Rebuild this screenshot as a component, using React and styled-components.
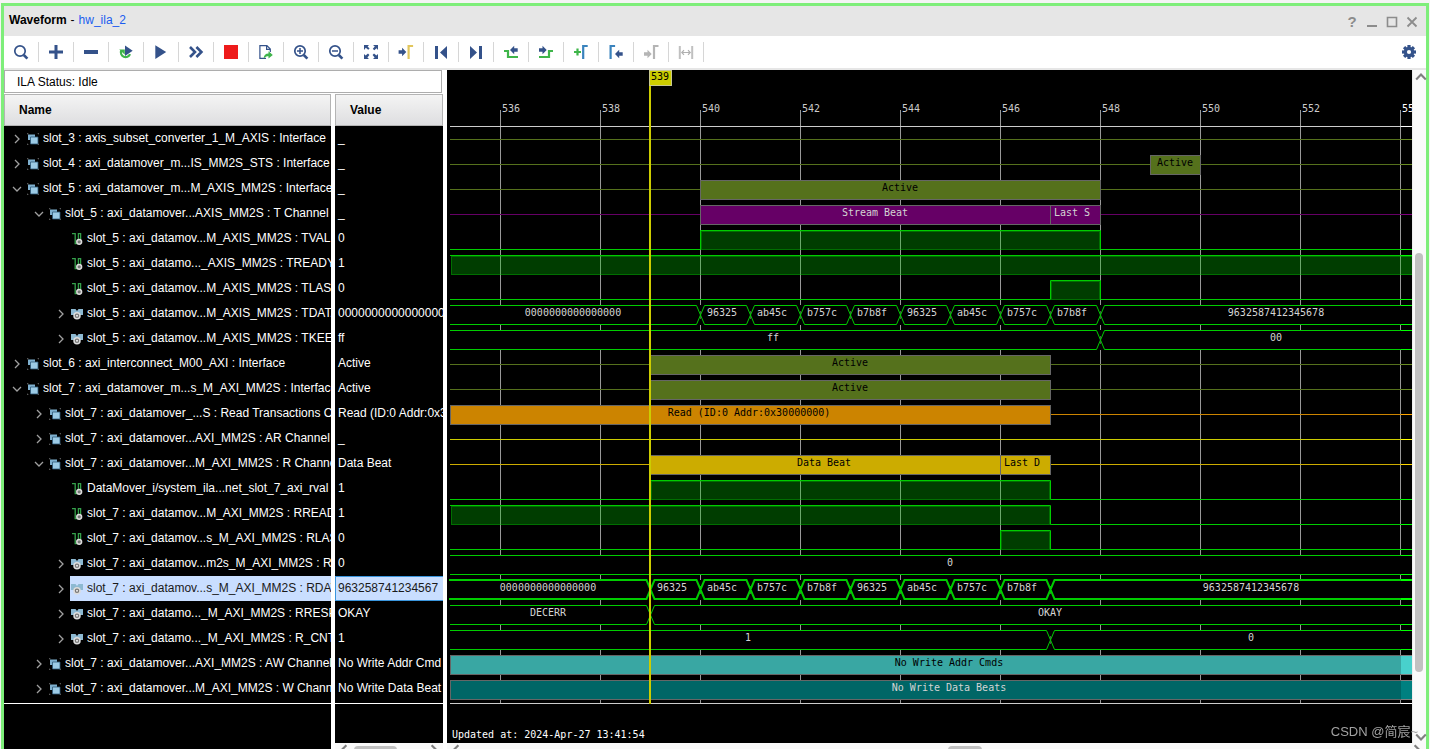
import React from "react";
import styled, { createGlobalStyle } from "styled-components";

const GlobalStyle = createGlobalStyle`
  *, *::before, *::after { box-sizing: border-box; }
  body {
    margin: 0;
    background: #f4f4f4;
    font-family: "Liberation Sans", Arial, sans-serif;
    font-size: 12px;
    color: #000;
    overflow: hidden;
  }
`;

const NAVY = "#34528a";
const GREEN = "#3fb54a";
const MONO = '"DejaVu Sans Mono", monospace';

/* ---------- window frame ---------- */

const Window = styled.main`
  display: flex;
  flex-direction: column;
  min-height: 100vh;
  margin: 3px 1px 0;
  border: 3px solid #7eee7a;
  border-bottom: 0;
  background: #fff;
`;

const TitleBar = styled.header`
  display: flex;
  align-items: center;
  justify-content: space-between;
  height: 30px;
  padding: 0 7px 2px 5px;
  background: #e6e6e6;
`;

const Title = styled.h1`
  display: flex;
  gap: 4px;
  margin: 0;
  font-size: 12px;
  line-height: 16px;
  font-weight: bold;
`;

const Dash = styled.span`
  font-weight: normal;
`;

const CoreLink = styled.a`
  color: #1a5cf0;
  font-weight: normal;
  text-decoration: none;
`;

const WindowControls = styled.div`
  display: flex;
  padding-top: 4px;
`;

const ControlButton = styled.button`
  display: grid;
  place-items: center;
  width: 20px;
  height: 20px;
  padding: 0;
  margin-right: ${(p) => (p.$last ? "-3px" : "0")};
  border: 0;
  background: none;
  color: #8c8c8c;
  font: bold 15px/20px "Liberation Sans", Arial, sans-serif;
`;

const Toolbar = styled.div`
  display: flex;
  align-items: center;
  height: 34px;
  padding-right: 9px;
  border-bottom: 2px solid #e6e6e6;
  background: #fff;
`;

const ToolButton = styled.button`
  display: grid;
  place-items: center;
  width: 35px;
  height: 20px;
  padding: 0;
  border: 0;
  border-right: 1px solid #d6d6d6;
  background: none;
`;

const SettingsButton = styled.button`
  display: grid;
  place-items: center;
  width: 16px;
  height: 20px;
  margin-left: auto;
  padding: 0;
  border: 0;
  background: none;
`;

const Content = styled.div`
  display: flex;
  flex: 1;
`;

/* ---------- signal table ---------- */

const SignalPane = styled.section`
  display: flex;
  flex-direction: column;
  flex: none;
  width: 439px;
`;

const Status = styled.div`
  height: 23px;
  margin: 0 1px 1px 0;
  padding-left: 12px;
  border: 1px solid #adadad;
  line-height: 22px;
`;

const SignalTable = styled.table`
  width: 100%;
  table-layout: fixed;
  border-collapse: separate;
  border-spacing: 0;
`;

const HeadCell = styled.th`
  width: ${(p) => (p.$name ? "331px" : "auto")};
  padding: ${(p) => (p.$name ? "0 4px 0 0" : "0")};
  text-align: left;
`;

const HeadBox = styled.div`
  height: 32px;
  padding-left: 14px;
  border: 1px solid #b4b4b4;
  background: linear-gradient(#f4f4f4, #dedee0);
  line-height: 30px;
`;

const NameCell = styled.td`
  height: 25px;
  padding: 0;
  border-right: 4px solid #fff;
  background: #000;
  overflow: hidden;
`;

const NameRow = styled.div`
  display: flex;
  height: 25px;
  padding-left: ${(p) => 6 + p.$level * 22}px;
`;

const Toggle = styled.button`
  display: grid;
  place-items: center;
  flex: none;
  width: 16px;
  height: 25px;
  padding: 0 3px 0 0;
  border: 0;
  background: none;
`;

const ToggleSpace = styled.span`
  flex: none;
  width: 16px;
`;

const SignalLabel = styled.span`
  display: flex;
  align-items: center;
  flex: 1;
  gap: 4px;
  min-width: 0;
  padding-left: 1px;
  overflow: hidden;
  background: ${(p) => (p.$selected ? "#c9deff" : "transparent")};
  color: ${(p) => (p.$selected ? "#1a1a1a" : "#fff")};

  svg { flex: none; }
`;

const SignalName = styled.span`
  flex: 1;
  min-width: 0;
  padding-bottom: 2px;
  white-space: nowrap;
  overflow: hidden;
`;

const ValueCell = styled.td`
  height: 25px;
  padding: ${(p) => (p.$selected ? "0 0 2px 2px" : "0 0 2px 3px")};
  border: ${(p) => (p.$selected ? "1px solid #3a95dc" : "0")};
  border-right: 0;
  background: ${(p) => (p.$selected ? "#c9deff" : "#000")};
  color: ${(p) => (p.$selected ? "#1a1a1a" : "#fff")};
  white-space: nowrap;
  overflow: hidden;
`;

const PaneFooter = styled.div`
  display: flex;
  flex: 1;
  gap: 4px;
`;

const FooterFill = styled.div`
  height: ${(p) => (p.$short ? "42px" : "100%")};
  padding-top: 2px;
  background: #000;

  &::before {
    content: "";
    display: block;
    height: 1px;
    background: #fff;
  }
`;

const FooterName = styled.div`
  width: 327px;
`;

const FooterValue = styled.div`
  flex: 1;
`;

/* ---------- scroll bars ---------- */

const HScroll = styled.div`
  display: flex;
  align-items: center;
  justify-content: space-between;
  height: 14px;
  padding: 0 3px;
  background: #fafafa;
`;

const HThumb = styled.div`
  width: ${(p) => p.$width}px;
  height: 8px;
  margin-left: ${(p) => p.$before || 0}px;
  margin-right: ${(p) => p.$after || 0}px;
  border-radius: 4px;
  background: #c1c1c1;
`;

const VScroll = styled.div`
  display: flex;
  flex-direction: column;
  align-items: center;
  flex: none;
  width: 14px;
  height: 673px;
  padding: 1px 0 0 2px;
  border-left: 1px solid #eee;
  background: #fafafa;
`;

const VThumb = styled.div`
  width: 8px;
  height: 419px;
  margin: 170px 3px auto 0;
  border-radius: 4px;
  background: #c1c1c1;
`;

/* ---------- waveform ---------- */

const WavePane = styled.section`
  flex: 1;
  min-width: 0;
  margin-left: 4px;
`;

const WaveBody = styled.div`
  display: flex;
`;

const Canvas = styled.div`
  flex: 1;
  min-width: 0;
  height: 673px;
  background: #000;
  overflow: hidden;
`;

const WaveSvg = styled.svg`
  display: block;
  width: 100%;
  height: 673px;
  font: 10px ${MONO};
`;

const Watermark = styled.div`
  position: fixed;
  right: 12px;
  bottom: 8px;
  font: 13px/18px "Liberation Sans", "Noto Sans CJK SC", sans-serif;
  color: #a2a2a2;
  pointer-events: none;
`;

/* ---------- icons ---------- */

const Icon = ({ children, size = 16 }) => (
  <svg width={size} height={size} viewBox={`0 0 ${size} ${size}`} fill="none" aria-hidden="true">
    {children}
  </svg>
);

const Lens = ({ children }) => (
  <Icon>
    <circle cx="7" cy="7" r="5.2" stroke={NAVY} strokeWidth="1.7" />
    <path d="M10.8 11l3.6 3.6" stroke={NAVY} strokeWidth="2.6" />
    {children}
  </Icon>
);

const Marker = ({ x, color }) => (
  <path d={`M${x} 15V2H${x + 4.5}`} stroke={color} strokeWidth="2.2" />
);

const ArrowRight = ({ x = 1, y = 8, color = NAVY }) => (
  <path d={`M${x} ${y - 1.8}h3.5v-2.4l4.2 4.2-4.2 4.2v-2.4h-3.5z`} fill={color} />
);

const ArrowLeft = ({ x = 8, y = 8, color = NAVY }) => (
  <path d={`M${x + 7.7} ${y - 1.8}h-3.5v-2.4l-4.2 4.2 4.2 4.2v-2.4h3.5z`} fill={color} />
);

const TOOLS = [
  ["Search", <Lens />],
  ["Add", <Icon><path d="M8 1v14M1 8h14" stroke={NAVY} strokeWidth="3" /></Icon>],
  ["Remove", <Icon><path d="M1 8h14" stroke={NAVY} strokeWidth="4" /></Icon>],
  ["Run trigger with auto re-trigger", (
    <Icon>
      <path d="M3.2 6.5a4.7 4.7 0 1 0 8.8 3.6" stroke={GREEN} strokeWidth="2.2" />
      <path d="M1.2 5.4h5.6v5.4z" fill={GREEN} />
      <path d="M7 1.5l7.7 5.3L7 12z" fill={NAVY} />
    </Icon>
  )],
  ["Run trigger", <Icon><path d="M2.3 1.3L13.2 8 2.3 15z" fill={NAVY} /></Icon>],
  ["Run trigger immediate", (
    <Icon><path d="M2 3l5 5-5 5M8.4 3l5 5-5 5" stroke={NAVY} strokeWidth="2.6" /></Icon>
  )],
  ["Stop trigger", <Icon><path d="M1 1h14v14H1z" fill="#ee1b1b" /></Icon>],
  ["Export data", (
    <Icon>
      <path d="M8 14.4H1.9V1.6h7l3.4 3.4v3M8.6 1.6v3.8h3.7" stroke={NAVY} strokeWidth="1.2" />
      <path d="M5.6 14.8c.3-3.6 2-5.2 4.9-5.2V7.3l4.3 3.7-4.3 3.6v-2.3c-2 0-3.3.6-4.9 2.5z" fill={GREEN} />
    </Icon>
  )],
  ["Zoom in", <Lens><path d="M7 4v6M4 7h6" stroke={NAVY} strokeWidth="1.5" /></Lens>],
  ["Zoom out", <Lens><path d="M4 7h6" stroke={NAVY} strokeWidth="1.5" /></Lens>],
  ["Zoom fit", (
    <Icon>
      <path d="M1 1h5L4.6 2.4l2 2-1.4 1.4-2.4-2L1 6zM15 1v5l-1.4-1.8-2.4 2-1.4-1.4 2-2.4L10 1zM1 15v-5l1.6 1.6 2.4-2 1.4 1.4-2 2.4L6 15zM15 15h-5l1.6-1.6-2-2.4 1.4-1.4 2.4 2L15 10z" fill={NAVY} />
    </Icon>
  )],
  ["Go to cursor", <Icon><ArrowRight x={0.6} /><Marker x={10.6} color="#e2c65c" /></Icon>],
  ["Go to time 0", <Icon><path d="M2 2h3v13H2zM14 2v13L7 8.5z" fill={NAVY} /></Icon>],
  ["Go to last time", <Icon><path d="M11 2h3v13h-3zM2 2v13l7-6.5z" fill={NAVY} /></Icon>],
  ["Previous transition", (
    <Icon><path d="M1 7h4v6h10" stroke={GREEN} strokeWidth="2.2" /><ArrowLeft x={7} y={6} /></Icon>
  )],
  ["Next transition", (
    <Icon><path d="M1 13h10V7h4" stroke={GREEN} strokeWidth="2.2" /><ArrowRight x={1} y={6} /></Icon>
  )],
  ["Add marker", (
    <Icon><path d="M1 8h7M4.5 4.5v7" stroke={GREEN} strokeWidth="2.2" /><Marker x={10.2} color="#3a83bd" /></Icon>
  )],
  ["Previous marker", <Icon><Marker x={2.6} color="#3a83bd" /><ArrowLeft x={7} y={10} /></Icon>],
  ["Next marker", <Icon><ArrowRight y={10} color="#b5b5b5" /><Marker x={11} color="#b5b5b5" /></Icon>],
  ["Swap cursors", (
    <Icon>
      <path d="M1.8 2v13M14.2 2v13" stroke="#c0c0c0" strokeWidth="2" />
      <path d="M4 8.5h8M6 6.2L3.8 8.5 6 10.8M10 6.2l2.2 2.3-2.2 2.3" stroke="#b0b0b0" strokeWidth="1.2" />
    </Icon>
  )],
];

const Gear = () => (
  <Icon>
    <g fill={NAVY}>
      {[0, 45, 90, 135].map((a) => (
        <rect key={a} x="6.4" y="1" width="3.2" height="14" transform={`rotate(${a} 8 8)`} />
      ))}
      <circle cx="8" cy="8" r="5.2" />
    </g>
    <circle cx="8" cy="8" r="2.1" fill="#fff" />
  </Icon>
);

const Chevron = ({ dir, size = 10, color = "#a0a0a0", width = 1.3 }) => {
  const turn = { right: 0, down: 90, left: 180, up: 270 }[dir];
  return (
    <svg width={size} height={size} viewBox="0 0 10 10" fill="none" aria-hidden="true">
      <path d="M3 1l4 4-4 4" stroke={color} strokeWidth={width} transform={`rotate(${turn} 5 5)`} />
    </svg>
  );
};

const GroupGlyph = () => (
  <Icon size={12}>
    <path d="M0 1.5V0h1.5M10.5 0H12v1.5M0 10.5V12h1.5M10.5 12H12v-1.5" stroke="#777" />
    <path d="M1 1.5h7v5.5H1z" fill="#7fb0cf" />
    <path d="M3.5 4h7.5v7H3.5z" fill="#9ccbe6" stroke="#2d5877" strokeWidth=".8" />
  </Icon>
);

const WireGlyph = () => (
  <Icon size={12}>
    <path d="M1 .7h3.2v10h3M7.4 8V.7h2.2V6" stroke="#35a14b" strokeWidth="1.3" />
    <circle cx="8.2" cy="8.8" r="2.4" fill="#777" stroke="#dcdcdc" strokeWidth="1.5" />
  </Icon>
);

const BusGlyph = () => (
  <Icon size={12}>
    <path d="M0 1h4.5L6 3l1.5-2H12v6H0z" fill="#8db9d2" />
    <circle cx="6" cy="7.8" r="3" fill="#777" stroke="#dcdcdc" strokeWidth="1.5" />
    <circle cx="6" cy="7.8" r="1" fill="#eee" />
  </Icon>
);

const GLYPHS = { group: GroupGlyph, wire: WireGlyph, bus: BusGlyph };

/* ---------- data ---------- */

const OLIVE = "#6b8e23";
const PURPLE = "#800080";
const ORANGE = "#ffa500";
const GOLD = "#ffd700";
const TURQUOISE = "#48d1cc";
const TEAL = "#008080";
const END = 4000;

const BEATS = ["96325", "ab45c", "b757c", "b7b8f", "96325", "ab45c", "b757c", "b7b8f"];
const beatLabels = (x) => BEATS.map((t, i) => [t, x + i * 50]);
const beatEdges = (x) => Array.from({ length: 9 }, (_, i) => x + i * 50);

// Wave x values are pixels from the left edge of the plot; one sample is 50px.
const SIGNALS = [
  { level: 0, kind: "group", open: false, name: "slot_3 : axis_subset_converter_1_M_AXIS : Interface", value: "_",
    wave: { type: "bars", color: OLIVE, bars: [] } },
  { level: 0, kind: "group", open: false, name: "slot_4 : axi_datamover_m...IS_MM2S_STS : Interface", value: "_",
    wave: { type: "bars", color: OLIVE, bars: [[703, 753]], labels: [["Active", 728]] } },
  { level: 0, kind: "group", open: true, name: "slot_5 : axi_datamover_m...M_AXIS_MM2S : Interface", value: "_",
    wave: { type: "bars", color: OLIVE, bars: [[253, 653]], labels: [["Active", 453]] } },
  { level: 1, kind: "group", open: true, name: "slot_5 : axi_datamover...AXIS_MM2S : T Channel", value: "_",
    wave: { type: "bars", color: PURPLE, light: true, bars: [[253, 603], [603, 653]], labels: [["Stream Beat", 428], ["Last S", 625]] } },
  { level: 2, kind: "wire", name: "slot_5 : axi_datamov...M_AXIS_MM2S : TVALID", value: "0",
    wave: { type: "bit", high: [253, 653] } },
  { level: 2, kind: "wire", name: "slot_5 : axi_datamo..._AXIS_MM2S : TREADY", value: "1",
    wave: { type: "bit", high: [3, END] } },
  { level: 2, kind: "wire", name: "slot_5 : axi_datamov...M_AXIS_MM2S : TLAST", value: "0",
    wave: { type: "bit", high: [603, 653] } },
  { level: 2, kind: "bus", open: false, name: "slot_5 : axi_datamov...M_AXIS_MM2S : TDATA", value: "0000000000000000",
    wave: { type: "bus", edges: beatEdges(253), labels: [["0000000000000000", 126], ...beatLabels(275), ["9632587412345678", 829]] } },
  { level: 2, kind: "bus", open: false, name: "slot_5 : axi_datamov...M_AXIS_MM2S : TKEEP", value: "ff",
    wave: { type: "bus", edges: [653], labels: [["ff", 326], ["00", 829]] } },
  { level: 0, kind: "group", open: false, name: "slot_6 : axi_interconnect_M00_AXI : Interface", value: "Active",
    wave: { type: "bars", color: OLIVE, bars: [[203, 603]], labels: [["Active", 403]] } },
  { level: 0, kind: "group", open: true, name: "slot_7 : axi_datamover_m...s_M_AXI_MM2S : Interface", value: "Active",
    wave: { type: "bars", color: OLIVE, bars: [[203, 603]], labels: [["Active", 403]] } },
  { level: 1, kind: "group", open: false, name: "slot_7 : axi_datamover_...S : Read Transactions O", value: "Read (ID:0 Addr:0x3",
    wave: { type: "bars", color: ORANGE, bars: [[3, 603]], labels: [["Read (ID:0 Addr:0x30000000)", 302]] } },
  { level: 1, kind: "group", open: false, name: "slot_7 : axi_datamover...AXI_MM2S : AR Channel", value: "_",
    wave: { type: "bars", color: "#ffff00", bars: [] } },
  { level: 1, kind: "group", open: true, name: "slot_7 : axi_datamover...M_AXI_MM2S : R Channel", value: "Data Beat",
    wave: { type: "bars", color: GOLD, bars: [[203, 553], [553, 603]], labels: [["Data Beat", 377], ["Last D", 575]] } },
  { level: 2, kind: "wire", name: "DataMover_i/system_ila...net_slot_7_axi_rval", value: "1",
    wave: { type: "bit", high: [203, 603] } },
  { level: 2, kind: "wire", name: "slot_7 : axi_datamov...M_AXI_MM2S : RREAD", value: "1",
    wave: { type: "bit", high: [3, 603] } },
  { level: 2, kind: "wire", name: "slot_7 : axi_datamov...s_M_AXI_MM2S : RLAS", value: "0",
    wave: { type: "bit", high: [553, 603] } },
  { level: 2, kind: "bus", open: false, name: "slot_7 : axi_datamov...m2s_M_AXI_MM2S : R", value: "0",
    wave: { type: "bus", edges: [], labels: [["0", 503]] } },
  { level: 2, kind: "bus", open: false, selected: true, name: "slot_7 : axi_datamov...s_M_AXI_MM2S : RDAT", value: "963258741234567",
    wave: { type: "bus", bold: true, edges: beatEdges(203), labels: [["0000000000000000", 101], ...beatLabels(225), ["9632587412345678", 804]] } },
  { level: 2, kind: "bus", open: false, name: "slot_7 : axi_datamo..._M_AXI_MM2S : RRESP", value: "OKAY",
    wave: { type: "bus", edges: [203], labels: [["DECERR", 101], ["OKAY", 603]] } },
  { level: 2, kind: "bus", open: false, name: "slot_7 : axi_datamo..._M_AXI_MM2S : R_CNT", value: "1",
    wave: { type: "bus", edges: [603], labels: [["1", 301], ["0", 804]] } },
  { level: 1, kind: "group", open: false, name: "slot_7 : axi_datamover...AXI_MM2S : AW Channel", value: "No Write Addr Cmd",
    wave: { type: "bars", color: TURQUOISE, bars: [[3, END]], labels: [["No Write Addr Cmds", 502]] } },
  { level: 1, kind: "group", open: false, name: "slot_7 : axi_datamover...M_AXI_MM2S : W Chann", value: "No Write Data Beat",
    wave: { type: "bars", color: TEAL, light: true, bars: [[3, END]], labels: [["No Write Data Beats", 502]] } },
];

const TICKS = Array.from({ length: 20 }, (_, i) => ({ t: 536 + i * 2, x: 53 + i * 100 }));
const ROW = 25;
const TOP = 56;
const BOTTOM = 633;
const CURSOR = 203;

const Bars = ({ y, color, bars }) => (
  <g>
    <path d={`M3 ${y + 13.5}H${END}`} stroke={color} />
    {bars.map(([a, b]) => (
      <rect key={a} x={a + 0.5} y={y + 4.5} width={b - a} height="19" fill={color} stroke="#808080" />
    ))}
  </g>
);

const Bit = ({ y, high: [a, b] }) => {
  const lo = y + 23.5;
  const hi = y + 4.5;
  const start = a > 3 ? `M3 ${lo}H${a + 0.5}V${hi}` : `M3 ${hi}`;
  return (
    <g>
      <rect x={a + 1} y={y + 5} width={b - a} height="19" fill="#00ff00" fillOpacity=".3" />
      <rect x={a + 1.5} y={y + 5.5} width={b - a - 2} height="18" stroke="#00ff00" strokeOpacity=".35" fill="none" />
      <path d={`${start}H${b + 0.5}V${lo}H${END}`} stroke="#00ff00" fill="none" />
    </g>
  );
};

const Bus = ({ y, edges, bold }) => {
  const hi = y + (bold ? 4 : 4.5);
  const lo = y + (bold ? 23 : 23.5);
  let top = `M${bold ? 2 : 3} ${hi}`;
  let bottom = `M${bold ? 2 : 3} ${lo}`;
  edges.forEach((x, i) => {
    top += `H${x - 3.5}L${x + 4.5} ${i % 2 ? hi : lo}`;
    bottom += `H${x - 3.5}L${x + 4.5} ${i % 2 ? lo : hi}`;
  });
  return (
    <g>
      <rect x="3" y={y + 4} width={END} height="20" fill="#000" />
      {edges.map((x) => (
        <path key={x} d={`M${x + 0.5} ${y + 10}v8`} stroke="#c0c0c0" strokeOpacity=".5" />
      ))}
      <path d={`${top}H${END}${bottom}H${END}`} stroke="#00ff00" strokeWidth={bold ? 2 : 1} fill="none" />
    </g>
  );
};

const TRACES = { bars: Bars, bit: Bit, bus: Bus };

const Waveform = () => (
  <WaveSvg role="img" aria-label="Signal waveforms">
    {TICKS.map(({ t, x }) => (
      <path key={t} d={`M${x + 0.5} 40V${BOTTOM}`} stroke="#c0c0c0" />
    ))}
    <path d={`M3 56.5H${END}M3 ${BOTTOM + 0.5}H${END}`} stroke="#fff" />
    {SIGNALS.map(({ wave }, i) => {
      const Trace = TRACES[wave.type];
      return <Trace key={i} y={TOP + i * ROW} {...wave} />;
    })}
    <rect width="954" height="640" fill="#000" fillOpacity=".2" />
    {TICKS.map(({ t, x }) => (
      <text key={t} x={x + 2} y="42" fill={x > 900 ? "#fff" : "#ccc"}>{t}</text>
    ))}
    {SIGNALS.map(({ wave }, i) =>
      (wave.labels || []).map(([text, x]) => (
        <text
          key={`${i}-${x}`}
          x={x}
          y={TOP + i * ROW + 15}
          textAnchor="middle"
          fill={wave.type === "bus" || wave.light ? "#d4d4d4" : "#000"}
        >
          {text}
        </text>
      ))
    )}
    <rect x={CURSOR - 1} y="0" width="2" height={BOTTOM + 1} fill="#cccc00" />
    <rect x={CURSOR - 0.5} y=".5" width="22" height="15" fill="#cccc00" stroke="#c8c890" />
    <text x={CURSOR + 1} y="10" fill="#000">539</text>
    <text x="5" y="668" fill="#fff">Updated at: 2024-Apr-27 13:41:54</text>
  </WaveSvg>
);

const SignalRow = ({ signal }) => {
  const Glyph = GLYPHS[signal.kind];
  const expandable = signal.kind !== "wire";
  return (
    <tr>
      <NameCell>
        <NameRow $level={signal.level}>
          {expandable ? (
            <Toggle aria-label={signal.open ? "Collapse" : "Expand"} aria-expanded={signal.open}>
              <Chevron dir={signal.open ? "down" : "right"} />
            </Toggle>
          ) : (
            <ToggleSpace />
          )}
          <SignalLabel $selected={signal.selected}>
            <Glyph />
            <SignalName>{signal.name}</SignalName>
          </SignalLabel>
        </NameRow>
      </NameCell>
      <ValueCell $selected={signal.selected}>{signal.value}</ValueCell>
    </tr>
  );
};

const ScrollArrow = ({ dir }) => <Chevron dir={dir} size={12} color="#808080" width={1.8} />;

export default function App() {
  return (
    <>
      <GlobalStyle />
      <Window>
        <TitleBar>
          <Title>
            Waveform <Dash>-</Dash> <CoreLink href="#hw_ila_2">hw_ila_2</CoreLink>
          </Title>
          <WindowControls>
            <ControlButton aria-label="Help">?</ControlButton>
            <ControlButton aria-label="Minimize">
              <Icon><path d="M3 12h10" stroke="currentColor" strokeWidth="2" /></Icon>
            </ControlButton>
            <ControlButton aria-label="Maximize">
              <Icon><path d="M3.5 3.5h9v9h-9z" stroke="currentColor" strokeWidth="1.6" /></Icon>
            </ControlButton>
            <ControlButton $last aria-label="Close">
              <Icon><path d="M3.5 3.5l9 9M12.5 3.5l-9 9" stroke="currentColor" strokeWidth="1.8" /></Icon>
            </ControlButton>
          </WindowControls>
        </TitleBar>

        <Toolbar role="toolbar" aria-label="Waveform tools">
          {TOOLS.map(([label, icon]) => (
            <ToolButton key={label} aria-label={label}>{icon}</ToolButton>
          ))}
          <SettingsButton aria-label="Settings"><Gear /></SettingsButton>
        </Toolbar>

        <Content>
          <SignalPane>
            <Status>ILA Status: Idle</Status>
            <SignalTable>
              <thead>
                <tr>
                  <HeadCell $name scope="col"><HeadBox>Name</HeadBox></HeadCell>
                  <HeadCell scope="col"><HeadBox>Value</HeadBox></HeadCell>
                </tr>
              </thead>
              <tbody>
                {SIGNALS.map((signal) => <SignalRow key={signal.name} signal={signal} />)}
              </tbody>
            </SignalTable>
            <PaneFooter>
              <FooterName><FooterFill /></FooterName>
              <FooterValue>
                <FooterFill $short />
                <HScroll>
                  <ScrollArrow dir="left" />
                  <HThumb $width={43} $after={28} />
                  <ScrollArrow dir="right" />
                </HScroll>
              </FooterValue>
            </PaneFooter>
          </SignalPane>

          <WavePane>
            <WaveBody>
              <Canvas><Waveform /></Canvas>
              <VScroll>
                <ScrollArrow dir="up" />
                <VThumb />
                <ScrollArrow dir="down" />
              </VScroll>
            </WaveBody>
            <HScroll>
              <ScrollArrow dir="left" />
              <HThumb $width={34} $before={56} />
              <ScrollArrow dir="right" />
            </HScroll>
          </WavePane>
        </Content>
      </Window>
      <Watermark>CSDN @简宸~</Watermark>
    </>
  );
}
